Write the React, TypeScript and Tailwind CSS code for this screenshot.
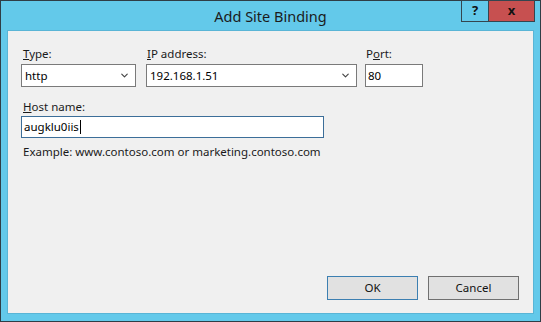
import { ChevronDown } from "lucide-react";

const font = { fontFamily: '"Noto Sans", "Open Sans", sans-serif' };

function Select({ value, width }: { value: string; width: string }) {
  return (
    <div
      className={`flex h-[23px] items-center justify-between border border-[#7a7a7a] bg-white pl-[3px] pr-[5px] text-black ${width}`}
    >
      <span>{value}</span>
      <ChevronDown className="h-[11px] w-[11px] text-[#444]" strokeWidth={2.5} />
    </div>
  );
}

function App() {
  return (
    <div
      className="flex h-[322px] w-[541px] flex-col border border-[#2f3d46] bg-[#63c9ea]"
      style={font}
    >
      <div className="relative h-[29px] shrink-0">
        <div className="pt-[5px] text-center text-[14.5px] text-[#1b1b1b]">Add Site Binding</div>
        <div className="absolute right-[5px] top-[-1px] flex h-[22px] border border-[#34454f]">
          <div className="flex w-[27px] items-center justify-center border-r border-[#34454f] text-[13px] font-bold text-[#111]">
            ?
          </div>
          <div className="flex w-[45px] items-center justify-center bg-[#c75050] text-[13px] font-bold text-[#111]">
            x
          </div>
        </div>
      </div>

      <div className="mx-[6px] mb-[7px] flex flex-1 flex-col border border-[#59b5d6] bg-[#f0f0f0] px-[13px] pb-[13px] pt-[14px] text-[11.5px] text-[#1a1a1a]">
        <div className="flex gap-[10px]">
          <div className="flex flex-col gap-[2px]">
            <span className="pl-[2px]">
              <u>T</u>ype:
            </span>
            <Select value="http" width="w-[115px]" />
          </div>
          <div className="flex flex-col gap-[2px]">
            <span className="pl-[1px]">
              <u>I</u>P address:
            </span>
            <Select value="192.168.1.51" width="w-[211px]" />
          </div>
          <div className="ml-[-2px] flex flex-col gap-[2px]">
            <span className="pl-[1px]">
              P<u>o</u>rt:
            </span>
            <div className="flex h-[23px] w-[58px] items-center border border-[#7a7a7a] bg-white pl-[2px] text-black">
              80
            </div>
          </div>
        </div>

        <div className="mt-[11px] flex flex-col">
          <span className="pl-[2px]">
            <u>H</u>ost name:
          </span>
          <div className="flex h-[22px] w-[303px] items-center border border-[#3c6e99] bg-white pl-[2px] text-black">
            augklu0iis
            <span className="ml-[1px] inline-block h-[14px] w-[1px] bg-black" />
          </div>
          <span className="mt-[5px] pl-[2px]">Example: www.contoso.com or marketing.contoso.com</span>
        </div>

        <div className="mt-auto flex justify-end gap-[10px] pr-[1px]">
          <button className="h-[24px] w-[91px] border border-[#3c7fb1] bg-[#e1e1e1] text-[11.5px] text-[#111]">
            OK
          </button>
          <button className="h-[24px] w-[91px] border border-[#707070] bg-[#e1e1e1] text-[11.5px] text-[#111]">
            Cancel
          </button>
        </div>
      </div>
    </div>
  );
}

export default App;
